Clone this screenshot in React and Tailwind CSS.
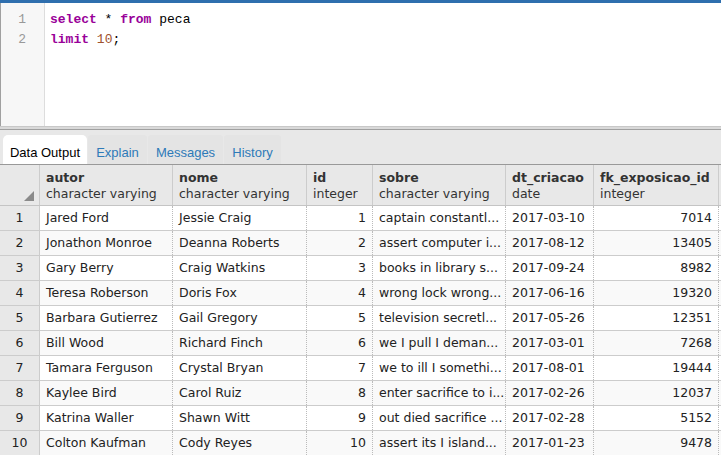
import React from "react";

const rows = [
  ["Jared Ford", "Jessie Craig", 1, "captain constantl...", "2017-03-10", 7014],
  ["Jonathon Monroe", "Deanna Roberts", 2, "assert computer i...", "2017-08-12", 13405],
  ["Gary Berry", "Craig Watkins", 3, "books in library s...", "2017-09-24", 8982],
  ["Teresa Roberson", "Doris Fox", 4, "wrong lock wrong...", "2017-06-16", 19320],
  ["Barbara Gutierrez", "Gail Gregory", 5, "television secretl...", "2017-05-26", 12351],
  ["Bill Wood", "Richard Finch", 6, "we I pull I deman...", "2017-03-01", 7268],
  ["Tamara Ferguson", "Crystal Bryan", 7, "we to ill I somethi...", "2017-08-01", 19444],
  ["Kaylee Bird", "Carol Ruiz", 8, "enter sacrifice to i...", "2017-02-26", 12037],
  ["Katrina Waller", "Shawn Witt", 9, "out died sacrifice ...", "2017-02-28", 5152],
  ["Colton Kaufman", "Cody Reyes", 10, "assert its I island...", "2017-01-23", 9478],
];

const cols = [
  { name: "autor", type: "character varying", w: "w-[133px]" },
  { name: "nome", type: "character varying", w: "w-[134px]" },
  { name: "id", type: "integer", w: "w-[66px]", right: true },
  { name: "sobre", type: "character varying", w: "w-[133px]" },
  { name: "dt_criacao", type: "date", w: "w-[88px]" },
  { name: "fk_exposicao_id", type: "integer", w: "w-[125px]", right: true },
];

export default function App() {
  return (
    <div className="w-[721px] h-[455px] overflow-hidden bg-white flex flex-col">
      <div className="h-[3px] bg-[#2f6fae] shrink-0" />
      <div className="h-[123px] shrink-0 flex border-l border-[#a0a0a0] font-['Liberation_Mono',monospace] text-[13px] leading-[20px]">
        <div className="w-[44px] bg-[#f7f7f7] border-r border-[#dddddd] pt-[7px] text-[#999999] text-right pr-[18px]">
          <div>1</div>
          <div>2</div>
        </div>
        <div className="pt-[7px] pl-[5px] text-black">
          <div>
            <span className="text-[#990099] font-bold">select</span> * <span className="text-[#990099] font-bold">from</span> peca
          </div>
          <div>
            <span className="text-[#990099] font-bold">limit</span> <span className="text-[#a0522d]">10</span>;
          </div>
        </div>
      </div>
      <div className="h-[3px] shrink-0 bg-[#d9d9d9] border-t border-[#c8c8c8]" />
      <div className="h-[36px] shrink-0 bg-[#e8e8e8] border-t border-[#a0a0a0] border-b border-b-[#999999] flex items-end pl-[3px] font-['Liberation_Sans',sans-serif] text-[13px]">
        <div className="h-[29px] w-[84px] bg-white rounded-t-[5px] flex items-center justify-center text-black pt-[7px]">Data Output</div>
        <div className="h-[29px] w-[59px] ml-[1px] bg-[#e4e4e4] rounded-t-[3px] flex items-center justify-center text-[#2e7ab8] pt-[7px]">Explain</div>
        <div className="h-[29px] w-[75px] ml-[1px] bg-[#e4e4e4] rounded-t-[3px] flex items-center justify-center text-[#2e7ab8] pt-[7px]">Messages</div>
        <div className="h-[29px] w-[57px] ml-[1px] bg-[#e4e4e4] rounded-t-[3px] flex items-center justify-center text-[#2e7ab8] pt-[7px]">History</div>
      </div>
      <div className="font-['DejaVu_Sans',sans-serif] text-[12.5px] text-[#222222]">
        <div className="flex h-[41px] bg-[#e8e8e8] border-b border-[#c4c4c4]">
          <div className="w-[40px] border-r border-[#cccccc] relative shrink-0">
            <div className="absolute right-[5px] bottom-[4px] w-0 h-0 border-l-[10px] border-l-transparent border-b-[10px] border-b-[#8a8a8a]" />
          </div>
          {cols.map((c) => (
            <div key={c.name} className={`${c.w} border-r border-[#cccccc] px-[6px] pt-[5px] leading-[16px] shrink-0 whitespace-nowrap overflow-hidden`}>
              <div className="font-bold text-[#333333]">{c.name}</div>
              <div className="text-[#333333]">{c.type}</div>
            </div>
          ))}
        </div>
        {rows.map((r, i) => (
          <div key={i} className={`flex h-[25px] border-b border-[#cccccc] ${i % 2 === 1 ? "bg-[#f9f9f9]" : "bg-white"}`}>
            <div className="w-[40px] bg-[#e8e8e8] border-r border-[#cccccc] flex items-center justify-center shrink-0">{i + 1}</div>
            {cols.map((c, j) => (
              <div
                key={j}
                className={`${c.w} border-r border-dotted border-[#bbbbbb] px-[6px] flex items-center shrink-0 whitespace-nowrap overflow-hidden ${c.right ? "justify-end" : ""}`}
              >
                {r[j]}
              </div>
            ))}
          </div>
        ))}
      </div>
    </div>
  );
}
